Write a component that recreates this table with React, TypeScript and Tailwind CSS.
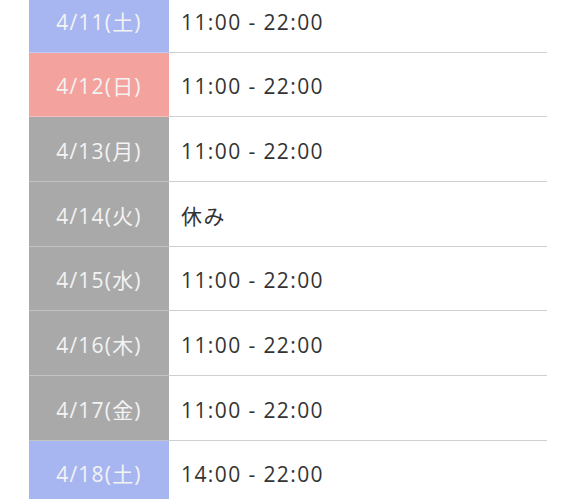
const rows = [
  { date: "4/11(土)", time: "11:00 - 22:00", kind: "sat" },
  { date: "4/12(日)", time: "11:00 - 22:00", kind: "sun" },
  { date: "4/13(月)", time: "11:00 - 22:00", kind: "day" },
  { date: "4/14(火)", time: "休み", kind: "day" },
  { date: "4/15(水)", time: "11:00 - 22:00", kind: "day" },
  { date: "4/16(木)", time: "11:00 - 22:00", kind: "day" },
  { date: "4/17(金)", time: "11:00 - 22:00", kind: "day" },
  { date: "4/18(土)", time: "14:00 - 22:00", kind: "sat" },
];

const bgByKind: Record<string, string> = {
  sat: "bg-[#a7b6f1]",
  sun: "bg-[#f4a29e]",
  day: "bg-[#a9a9a9]",
};

export default function App() {
  return (
    <div
      className="w-[576px] h-[499px] overflow-hidden bg-white"
      style={{ fontFamily: '"Open Sans", "Noto Sans CJK JP", sans-serif' }}
    >
      <div className="-mt-[12px] ml-[29px] w-[518px] flex flex-col">
        {rows.map((row) => (
          <div key={row.date} className="flex h-[64.7px]">
            <div
              className={`w-[140px] shrink-0 flex items-center justify-center pt-[5px] text-[21px] tracking-[1.2px] text-[#f3f3f3] border-b border-white/30 ${bgByKind[row.kind]}`}
            >
              {row.date}
            </div>
            <div className="flex-1 flex items-center pl-[12px] pt-[5px] text-[21px] tracking-[1.4px] text-[#333] border-b border-[#cfcfcf]">
              {row.time}
            </div>
          </div>
        ))}
      </div>
    </div>
  );
}
